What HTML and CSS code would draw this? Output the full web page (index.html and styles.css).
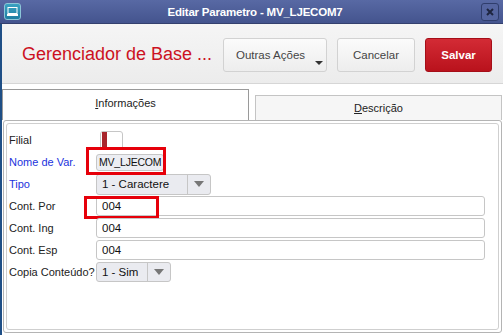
FILE: index.html
```html
<!DOCTYPE html>
<html lang="pt">
<head>
    <meta charset="UTF-8">
    <title>Editar Parametro - MV_LJECOM7</title>
    <link rel="stylesheet" href="styles.css">
</head>
<body>
    <div class="window">
        <!-- Barra de titulo -->
        <div class="titlebar">
            <span class="app-icon">
                <svg width="11" height="9" viewBox="0 0 11 9">
                    <rect x="1" y="0.5" width="9" height="6" fill="none" stroke="#fff" stroke-width="1"/>
                    <rect x="0" y="7" width="11" height="2" fill="#fff"/>
                </svg>
            </span>
            <span class="title-text">Editar Parametro - MV_LJECOM7</span>
            <span class="close-btn">
                <svg width="8" height="8" viewBox="0 0 8 8">
                    <path d="M1 1 L7 7 M7 1 L1 7" stroke="#1e2540" stroke-width="2"/>
                </svg>
            </span>
        </div>

        <!-- Cabecalho com acoes -->
        <div class="header">
            <h1 class="page-title">Gerenciador de Base ...</h1>
            <div class="actions">
                <button class="btn btn-more">Outras Ações<span class="caret"></span></button>
                <button class="btn btn-cancel">Cancelar</button>
                <button class="btn btn-save">Salvar</button>
            </div>
        </div>

        <!-- Abas -->
        <div class="tabs">
            <div class="tab active"><u>I</u>nformações</div>
            <div class="tab"><u>D</u>escrição</div>
        </div>

        <div class="panel">
            <div class="panel-inner">
                <div class="row">
                    <label>Filial</label>
                    <div class="field-check"><span class="mark"></span></div>
                </div>
                <div class="row">
                    <label class="required">Nome de Var.</label>
                    <div class="mark-wrap">
                        <div class="field field-disabled">MV_LJECOM</div>
                        <span class="highlight hl-nome"></span>
                    </div>
                </div>
                <div class="row">
                    <label class="required">Tipo</label>
                    <div class="select select-tipo"><span class="select-value">1 - Caractere</span><span class="select-arrow"></span></div>
                </div>
                <div class="row">
                    <label>Cont. Por</label>
                    <div class="field">004<span class="highlight hl-por"></span></div>
                </div>
                <div class="row">
                    <label>Cont. Ing</label>
                    <div class="field">004</div>
                </div>
                <div class="row">
                    <label>Cont. Esp</label>
                    <div class="field">004</div>
                </div>
                <div class="row">
                    <label>Copia Conteúdo?</label>
                    <div class="select select-sim"><span class="select-value">1 - Sim</span><span class="select-arrow"></span></div>
                </div>
            </div>
        </div>
    </div>
</body>
</html>
```
FILE: styles.css
```css
/* Geral */
body {
    margin: 0;
    width: 503px;
    height: 335px;
    overflow: hidden;
    font-family: "Liberation Sans", Arial, sans-serif;
    background: #fff;
}

.window {
    height: 335px;
    border-left: 2px solid #1f4f86;
    box-sizing: border-box;
    display: flex;
    flex-direction: column;
}

/* Barra de titulo */
.titlebar {
    height: 24px;
    margin-left: -2px;
    background: linear-gradient(#5869a4, #44548e);
    border-bottom: 1px solid #34406e;
    box-sizing: border-box;
    display: flex;
    align-items: center;
    padding: 0 4px;
}

.app-icon {
    width: 15px;
    height: 15px;
    border: 1px solid #8cc6d8;
    border-radius: 3px;
    background: linear-gradient(#3aa2c2, #1f7ea2);
    display: flex;
    align-items: center;
    justify-content: center;
}

.title-text {
    flex: 1;
    text-align: center;
    color: #fff;
    font-size: 11.5px;
    font-weight: bold;
    letter-spacing: -0.2px;
    padding-left: 8px;
}

.close-btn {
    width: 16px;
    height: 16px;
    border: 1px solid #2f3d6c;
    border-radius: 3px;
    background: #5565a0;
    display: flex;
    align-items: center;
    justify-content: center;
}

/* Cabecalho */
.header {
    height: 60px;
    background: linear-gradient(#f5f5f5, #ececec);
    border-bottom: 1px solid #d6d6d6;
    box-sizing: border-box;
    display: flex;
    align-items: center;
    justify-content: space-between;
    padding: 2px 11px 0 20px;
}

.page-title {
    margin: 0;
    font-size: 18px;
    font-weight: normal;
    color: #cc1122;
}

.actions {
    display: flex;
    gap: 10px;
}

.btn {
    height: 34px;
    font-family: "Liberation Sans", Arial, sans-serif;
    font-size: 11.5px;
    color: #444;
    border: 1px solid #d2d2d2;
    border-radius: 3px;
    background: linear-gradient(#fbfbfb, #ededed);
    position: relative;
    padding: 0;
}

.btn-more {
    width: 104px;
    text-align: left;
    padding-left: 12px;
}

.caret {
    position: absolute;
    right: 3px;
    bottom: 6px;
    border-left: 4px solid transparent;
    border-right: 4px solid transparent;
    border-top: 4px solid #333;
}

.btn-cancel {
    width: 78px;
}

.btn-save {
    width: 67px;
    color: #fff;
    font-weight: bold;
    border-color: #a50e18;
    background: linear-gradient(#d32b35, #b9121c);
}

/* Abas */
.tabs {
    display: flex;
    align-items: flex-end;
    margin-top: 5px;
    gap: 6px;
    padding-right: 1px;
}

.tab {
    flex: 1;
    height: 25px;
    font-size: 11px;
    color: #222;
    border: 1px solid #c4c4c4;
    border-bottom: none;
    background: #f6f6f6;
    box-sizing: border-box;
    display: flex;
    align-items: center;
    justify-content: center;
}

.tab.active {
    height: 31px;
    border-color: #9a9a9a;
    background: #fff;
    padding-bottom: 4px;
}

/* Painel */
.panel {
    flex: 1;
    margin: 0 1px 2px 1px;
    border: 1px solid #b4b4b4;
    border-radius: 3px;
    padding: 2px;
    display: flex;
}

.panel-inner {
    flex: 1;
    border: 1px solid #cfcfcf;
    border-radius: 3px;
    padding: 5px 13px 0 2px;
}

.row {
    height: 22px;
    display: flex;
    align-items: center;
}

.row label {
    width: 87px;
    flex-shrink: 0;
    font-size: 11px;
    color: #222;
}

.row label.required {
    color: #2233dd;
}

.field {
    flex: 1;
    height: 20px;
    border: 1px solid #c6c6c6;
    border-radius: 3px;
    box-sizing: border-box;
    font-size: 11.5px;
    color: #111;
    padding-left: 5px;
    display: flex;
    align-items: center;
    position: relative;
}

.mark-wrap {
    position: relative;
}

.field-disabled {
    width: 68px;
    height: 17px;
    background: #eceef3;
    padding-left: 2px;
    font-size: 10.5px;
    letter-spacing: -0.2px;
    white-space: nowrap;
}

.field-check {
    width: 23px;
    height: 19px;
    margin-left: 4px;
    border: 1px solid #c6c6c6;
    border-radius: 3px;
    box-sizing: border-box;
    position: relative;
}

.mark {
    position: absolute;
    left: 1px;
    top: 0;
    width: 5px;
    height: 15px;
    background: #a8262c;
}

.select {
    height: 21px;
    border: 1px solid #c6c6c6;
    border-radius: 3px;
    box-sizing: border-box;
    background: #eaebf0;
    display: flex;
    font-size: 11.5px;
    color: #111;
}

.select-tipo {
    width: 115px;
}

.select-sim {
    width: 75px;
    height: 20px;
}

.select-value {
    flex: 1;
    padding-left: 5px;
    display: flex;
    align-items: center;
}

.select-arrow {
    width: 22px;
    border-left: 1px solid #c6c6c6;
    display: flex;
    align-items: center;
    justify-content: center;
}

.select-arrow::after {
    content: "";
    border-left: 5px solid transparent;
    border-right: 5px solid transparent;
    border-top: 6px solid #777;
}

/* Destaques vermelhos */
.highlight {
    position: absolute;
    border: 3px solid #e6000a;
    box-sizing: border-box;
}

.hl-nome {
    left: -10px;
    top: -7px;
    width: 80px;
    height: 28px;
}

.hl-por {
    left: -13px;
    top: -1px;
    width: 75px;
    height: 23px;
}
```
